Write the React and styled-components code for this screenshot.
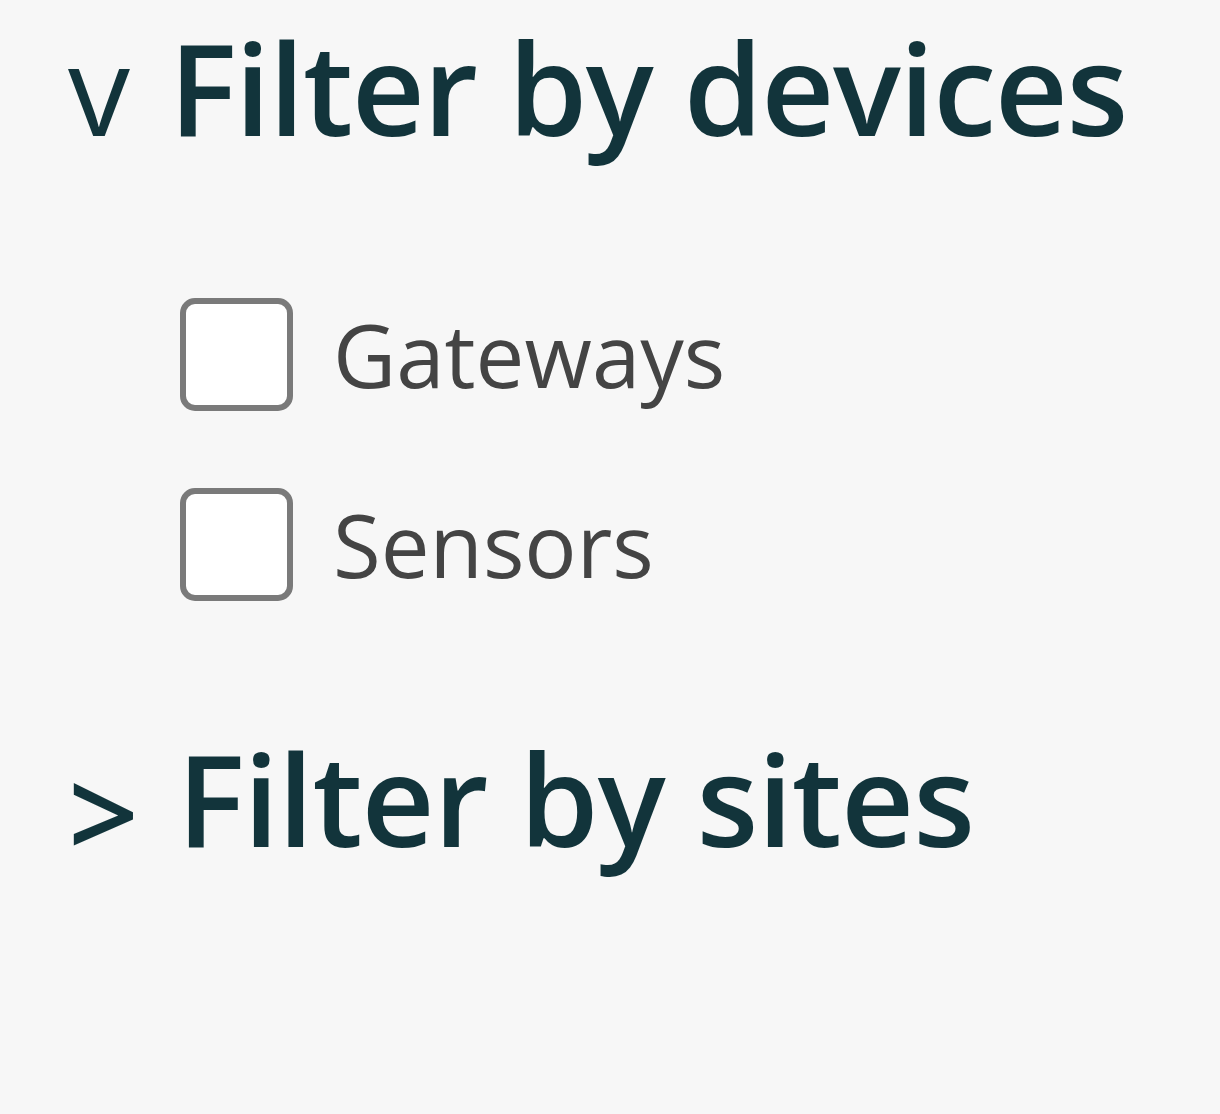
import React from "react";
import styled, { createGlobalStyle } from "styled-components";

const Global = createGlobalStyle`
  html, body { margin: 0; padding: 0; background: #f7f7f7; }
  body { font-family: "Open Sans", sans-serif; }
`;

const Page = styled.div`
  width: 1220px;
  height: 1114px;
  background: #f7f7f7;
  padding: 17px 0 0 68px;
  box-sizing: border-box;
`;

const Section = styled.section`
  display: flex;
  flex-direction: column;
  margin-bottom: ${(p) => p.$gap || 0}px;
`;

const Heading = styled.h2`
  margin: 0;
  display: flex;
  align-items: baseline;
  gap: ${(p) => p.$gap}px;
  font-family: "Open Sans", sans-serif;
  font-weight: 600;
  font-size: 127px;
  line-height: 140px;
  letter-spacing: ${(p) => p.$spacing}px;
  color: #12343b;
`;

const Toggle = styled.span`
  font-weight: ${(p) => p.$weight || 500};
  font-size: 124px;
  letter-spacing: 0;
  transform: translateY(${(p) => p.$shift || 0}px);
`;

const List = styled.div`
  display: flex;
  flex-direction: column;
  gap: 77px;
  padding: 140px 0 0 112px;
`;

const Row = styled.label`
  display: flex;
  align-items: center;
  gap: 40px;
`;

const Box = styled.span`
  width: 113px;
  height: 113px;
  box-sizing: border-box;
  border: 6px solid #7a7a7a;
  border-radius: 15px;
  background: #ffffff;
`;

const Label = styled.span`
  font-family: "Open Sans", sans-serif;
  font-size: 87px;
  color: #444444;
  line-height: 113px;
`;

export default function App() {
  return (
    <Page>
      <Global />
      <Section $gap={127}>
        <Heading $gap={39} $spacing={-1.5}>
          <Toggle $weight={500}>v</Toggle>
          <span>Filter by devices</span>
        </Heading>
        <List>
          <Row>
            <Box />
            <Label>Gateways</Label>
          </Row>
          <Row>
            <Box />
            <Label>Sensors</Label>
          </Row>
        </List>
      </Section>
      <Section>
        <Heading $gap={38} $spacing={-1}>
          <Toggle $weight={600} $shift={12}>&gt;</Toggle>
          <span>Filter by sites</span>
        </Heading>
      </Section>
    </Page>
  );
}
